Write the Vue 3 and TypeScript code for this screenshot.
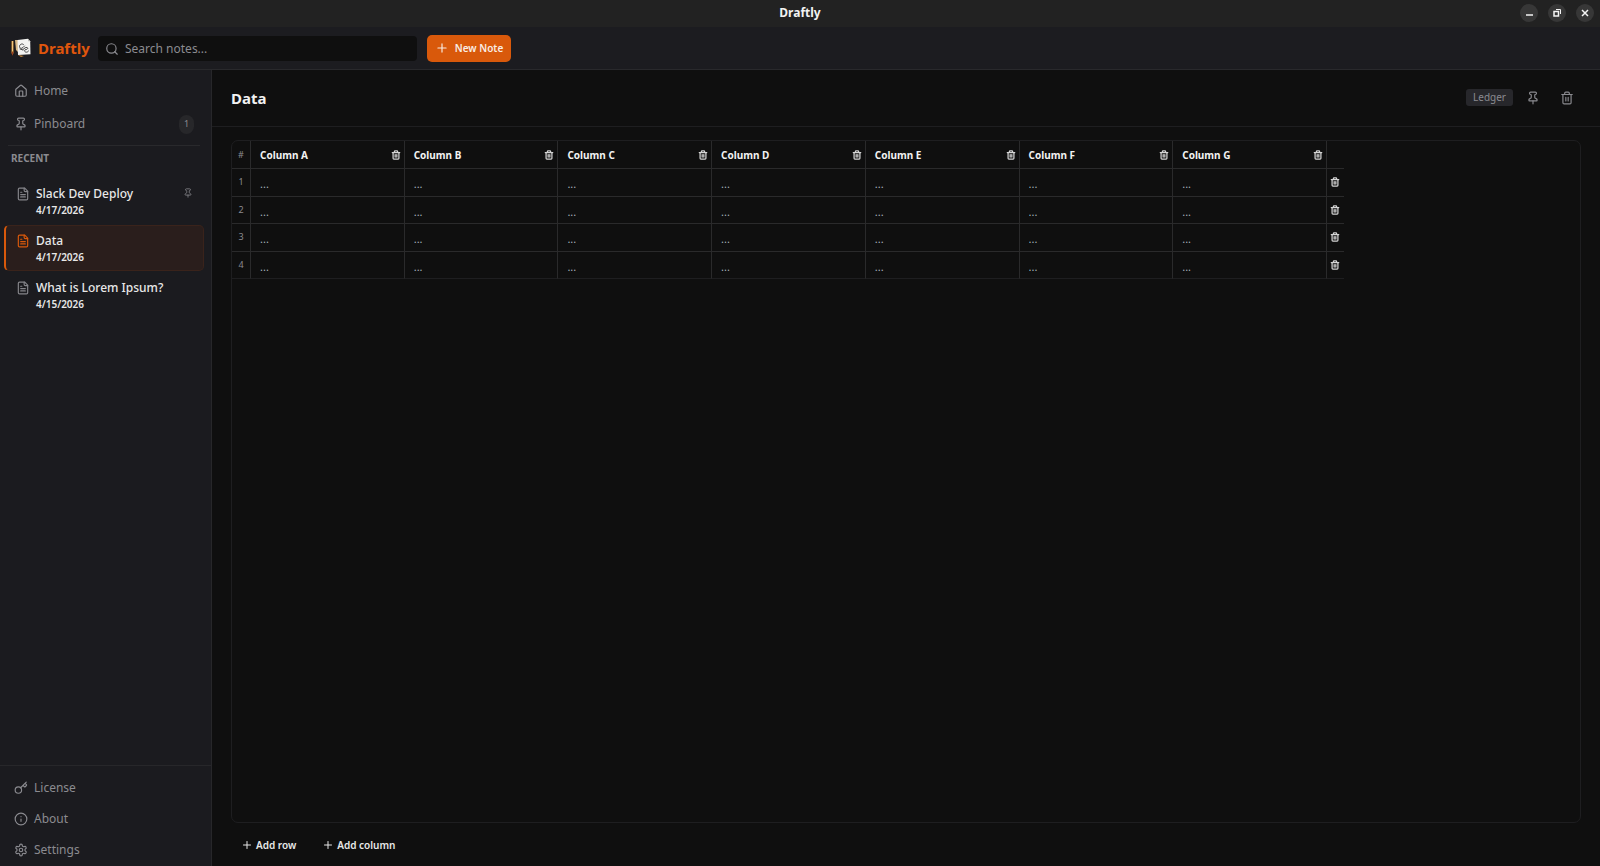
<script setup lang="ts">
import { ref } from 'vue'

interface Note {
  title: string
  date: string
  pinned: boolean
  active: boolean
}

const query = ref('')
const notes: Note[] = [
  { title: 'Slack Dev Deploy', date: '4/17/2026', pinned: true, active: false },
  { title: 'Data', date: '4/17/2026', pinned: false, active: true },
  { title: 'What is Lorem Ipsum?', date: '4/15/2026', pinned: false, active: false },
]
const columns = ['A', 'B', 'C', 'D', 'E', 'F', 'G'].map((c) => `Column ${c}`)
const rows = [1, 2, 3, 4]
</script>

<template>
  <svg class="defs" aria-hidden="true">
    <symbol id="i-home" viewBox="0 0 24 24"><path d="M15 21v-8a1 1 0 0 0-1-1h-4a1 1 0 0 0-1 1v8" /><path d="M3 10a2 2 0 0 1 .7-1.5l7-6a2 2 0 0 1 2.6 0l7 6A2 2 0 0 1 21 10v9a2 2 0 0 1-2 2H5a2 2 0 0 1-2-2z" /></symbol>
    <symbol id="i-pin" viewBox="0 0 24 24"><path d="M12 17v5" /><path d="M9 10.8a2 2 0 0 1-1.1 1.8l-1.8.9A2 2 0 0 0 5 15.2V16a1 1 0 0 0 1 1h12a1 1 0 0 0 1-1v-.8a2 2 0 0 0-1.1-1.7l-1.8-.9A2 2 0 0 1 15 10.800V7a1 1 0 0 1 1-1 2 2 0 0 0 0-4H8a2 2 0 0 0 0 4 1 1 0 0 1 1 1z" /></symbol>
    <symbol id="i-file" viewBox="0 0 24 24"><path d="M15 2H6a2 2 0 0 0-2 2v16a2 2 0 0 0 2 2h12a2 2 0 0 0 2-2V7z" /><path d="M14 2v4a2 2 0 0 0 2 2h4M10 9H8M16 13H8M16 17H8" /></symbol>
    <symbol id="i-trash" viewBox="0 0 24 24"><path d="M3 6h18M19 6v14a2 2 0 0 1-2 2H7a2 2 0 0 1-2-2V6M8 6V4a2 2 0 0 1 2-2h4a2 2 0 0 1 2 2v2M10 11v6M14 11v6" /></symbol>
    <symbol id="i-plus" viewBox="0 0 24 24"><path d="M5 12h14M12 5v14" /></symbol>
    <symbol id="i-search" viewBox="0 0 24 24"><circle cx="11" cy="11" r="8" /><path d="m21 21-4.300-4.300" /></symbol>
    <symbol id="i-key" viewBox="0 0 24 24"><circle cx="7.500" cy="15.500" r="5.500" /><path d="m21 2-9.600 9.600M15.500 7.500l2.300 2.300a1 1 0 0 0 1.400 0l2.100-2.100a1 1 0 0 0 0-1.400L19 4" /></symbol>
    <symbol id="i-info" viewBox="0 0 24 24"><circle cx="12" cy="12" r="10" /><path d="M12 16v-4M12 8h.01" /></symbol>
    <symbol id="i-gear" viewBox="0 0 24 24"><path d="M12.200 2h-.4a2 2 0 0 0-2 2v.2a2 2 0 0 1-1 1.700l-.4.3a2 2 0 0 1-2 0l-.2-.1a2 2 0 0 0-2.700.7l-.2.4a2 2 0 0 0 .7 2.700l.2.1a2 2 0 0 1 1 1.700v.5a2 2 0 0 1-1 1.800l-.2.1a2 2 0 0 0-.7 2.700l.2.4a2 2 0 0 0 2.700.7l.2-.1a2 2 0 0 1 2 0l.4.3a2 2 0 0 1 1 1.700v.2a2 2 0 0 0 2 2h.4a2 2 0 0 0 2-2v-.2a2 2 0 0 1 1-1.700l.4-.3a2 2 0 0 1 2 0l.2.1a2 2 0 0 0 2.700-.7l.2-.4a2 2 0 0 0-.7-2.700l-.2-.1a2 2 0 0 1-1-1.700v-.5a2 2 0 0 1 1-1.800l.2-.1a2 2 0 0 0 .7-2.700l-.2-.4a2 2 0 0 0-2.700-.7l-.2.1a2 2 0 0 1-2 0l-.4-.3a2 2 0 0 1-1-1.700V4a2 2 0 0 0-2-2z" /><circle cx="12" cy="12" r="3" /></symbol>
  </svg>

  <div class="window">
    <div class="titlebar">
      <span class="caption">Draftly</span>
      <div class="controls">
        <button type="button" aria-label="Minimize"><svg viewBox="0 0 18 18"><path d="M6 11h7" /></svg></button>
        <button type="button" aria-label="Restore"><svg viewBox="0 0 18 18"><path d="M6 7.500h4.500V12H6z" /><path class="thin" d="M8 5.500h4.500V10" /></svg></button>
        <button type="button" aria-label="Close"><svg viewBox="0 0 18 18"><path d="M6 6l6 6M12 6l-6 6" /></svg></button>
      </div>
    </div>

    <header class="topbar">
      <div class="brand">
        <svg class="logo" viewBox="0 0 20 20" aria-hidden="true">
          <path d="M.5 3h2v12l-1 2-1-2z" fill="#c98a3a" />
          <path d="M1 3h1v10H1z" fill="#f0c67c" />
          <path d="M.5 14h2l-1 4z" fill="#9b3e1d" />
          <path d="M4 2l5 0-1 13-3-3z" fill="#d6b98b" />
          <path d="M7 17l6 1-3 1z" fill="#c88a3d" />
          <path d="M6.500 2L17 .8l2.200 2.400.3 13L7 17z" fill="#f3f3f1" />
          <path d="M17 .8l.2 2.500 2 0z" fill="#b9b9b5" />
          <path d="M12.500 6.500c-1.500-1.500-4 0-4 2s2 2.500 3.500 1l1.500-1.500M12 11.500c1.500-1 2.500-2.500 4-2s.5 2-1 2-2 2-.5 2.500 2 0 3-1M9 11l3 1" fill="none" stroke="#333" stroke-width=".9" stroke-linecap="round" />
        </svg>
        <span>Draftly</span>
      </div>
      <label class="search">
        <svg class="icon s14"><use href="#i-search" /></svg>
        <input v-model="query" type="text" aria-label="Search notes" placeholder="Search notes..." />
      </label>
      <button type="button" class="new-note"><svg class="icon s14"><use href="#i-plus" /></svg>New Note</button>
    </header>

    <div class="body">
      <aside class="sidebar">
        <nav class="nav" aria-label="Main">
          <a href="#home"><svg class="icon s14"><use href="#i-home" /></svg>Home</a>
          <a href="#pinboard"><svg class="icon s14"><use href="#i-pin" /></svg>Pinboard<span class="count">1</span></a>
        </nav>
        <h2 class="section">RECENT</h2>
        <ul class="notes">
          <li v-for="note in notes" :key="note.title">
            <a href="#note" class="note" :class="{ active: note.active }">
              <svg class="icon s14"><use href="#i-file" /></svg>
              <span class="meta"><span class="name">{{ note.title }}</span><span class="date">{{ note.date }}</span></span>
              <svg v-if="note.pinned" class="icon s10"><use href="#i-pin" /></svg>
            </a>
          </li>
        </ul>
        <nav class="nav bottom" aria-label="Application">
          <a href="#license"><svg class="icon s14"><use href="#i-key" /></svg>License</a>
          <a href="#about"><svg class="icon s14"><use href="#i-info" /></svg>About</a>
          <a href="#settings"><svg class="icon s14"><use href="#i-gear" /></svg>Settings</a>
        </nav>
      </aside>

      <main class="main">
        <div class="heading">
          <h1>Data</h1>
          <span class="tag">Ledger</span>
          <button type="button" class="tool" aria-label="Pin note"><svg class="icon s14"><use href="#i-pin" /></svg></button>
          <button type="button" class="tool" aria-label="Delete note"><svg class="icon s14"><use href="#i-trash" /></svg></button>
        </div>

        <div class="sheet">
          <table>
            <colgroup>
              <col class="c-num" />
              <col v-for="c in columns" :key="c" />
              <col class="c-del" />
            </colgroup>
            <thead>
              <tr>
                <th class="num" scope="col">#</th>
                <th v-for="c in columns" :key="c" scope="col">
                  <div class="col-head">{{ c }}<button type="button" :aria-label="`Delete ${c}`"><svg class="icon s10"><use href="#i-trash" /></svg></button></div>
                </th>
                <td class="del"></td>
              </tr>
            </thead>
            <tbody>
              <tr v-for="r in rows" :key="r">
                <th class="num" scope="row">{{ r }}</th>
                <td v-for="c in columns" :key="c"><input type="text" placeholder="..." :aria-label="`${c}, row ${r}`" /></td>
                <td class="del"><button type="button" :aria-label="`Delete row ${r}`"><svg class="icon s10"><use href="#i-trash" /></svg></button></td>
              </tr>
            </tbody>
          </table>
        </div>

        <div class="actions">
          <button type="button"><svg class="icon s12"><use href="#i-plus" /></svg>Add row</button>
          <button type="button"><svg class="icon s12"><use href="#i-plus" /></svg>Add column</button>
        </div>
      </main>
    </div>
  </div>
</template>

<style>
html, body { margin: 0; height: 100%; background: #0f0f10; }
#app { height: 100%; }
</style>

<style scoped>
* { box-sizing: border-box; }
.defs { position: absolute; width: 0; height: 0; }
.window { display: flex; flex-direction: column; height: 100vh; overflow: hidden; background: #0f0f0f; color: #e8e8e8; font: 12px/18px "Noto Sans", "Open Sans", sans-serif; }
button { display: flex; align-items: center; justify-content: center; border: 0; padding: 0; background: none; color: inherit; font: inherit; cursor: pointer; }
input { border: 0; outline: 0; padding: 0; background: none; color: inherit; font: inherit; min-width: 0; }
a { color: inherit; text-decoration: none; }
h1, h2, ul { margin: 0; padding: 0; list-style: none; }
.icon { flex: none; fill: none; stroke: currentColor; stroke-width: 2; stroke-linecap: round; stroke-linejoin: round; }
.s14 { width: 14px; height: 14px; }
.s12 { width: 12px; height: 12px; }
.s10 { width: 10px; height: 10px; }

.titlebar { flex: none; display: grid; grid-template-columns: 1fr auto 1fr; align-items: center; height: 27px; padding-bottom: 2px; background: #222; }
.caption { grid-column: 2; font-weight: 700; color: #f2f2f2; }
.controls { display: flex; justify-content: flex-end; gap: 10px; padding-right: 6px; }
.controls button { width: 18px; height: 18px; border-radius: 50%; background: #373737; }
.controls svg { width: 18px; height: 18px; fill: none; stroke: #f5f5f5; stroke-width: 1.500; }
.controls .thin { stroke-width: 1; }

.topbar { flex: none; display: flex; align-items: center; height: 43px; padding: 0 11px; border-bottom: 1px solid #29292c; background: #1c1c20; }
.brand { display: flex; align-items: center; gap: 7px; width: 87px; color: #e0560d; font-size: 15px; font-weight: 700; }
.logo { flex: none; width: 20px; height: 20px; }
.search { display: flex; align-items: center; gap: 6px; flex: 0 1 319px; height: 25px; padding: 2px 7px 0; border-radius: 4px; background: #0f0f0f; color: #8b8b90; }
.search input { flex: 1; }
.search input::placeholder { color: #8b8b90; opacity: 1; }
.new-note { gap: 6px; width: 84px; height: 27px; margin-left: 10px; border-radius: 5px; background: #d9590b; color: #f8ece4; font-size: 10px; font-weight: 600; white-space: nowrap; }

.body { flex: 1; display: flex; min-height: 0; }
.sidebar { flex: none; display: flex; flex-direction: column; width: 212px; border-right: 1px solid #27272a; background: #1b1b1f; }
.nav { display: flex; flex-direction: column; margin: 5px 11px 0 8px; padding-bottom: 4px; border-bottom: 1px solid #29292c; color: #8b8b90; }
.nav a { display: flex; align-items: center; gap: 6px; height: 32px; padding: 0 6px; }
.nav a + a { height: 34px; }
.nav.bottom { margin: 0; padding: 6px 8px 1px; border-top: 1px solid #27272a; border-bottom: 0; }
.nav.bottom a { height: 31px; }
.count { display: grid; place-items: center; width: 15px; height: 19px; margin-left: auto; border-radius: 8px; background: #27272a; font-size: 9px; }
.section { padding: 4px 11px; font-size: 10px; line-height: 16px; font-weight: 700; color: #8b8b90; }
.notes { flex: 1; padding: 8px 7px 0 4px; min-height: 0; overflow: hidden; }
.notes li { margin-bottom: 1px; }
.note { display: flex; align-items: flex-start; gap: 6px; height: 46px; padding: 7px 10px 0; border: 1px solid transparent; border-left-width: 2px; border-radius: 5px; }
.note .icon { margin-top: 1px; color: #85858a; }
.note .s10 { margin-top: 2px; }
.note.active { background: #2a1e1c; border-color: #3a231b; border-left-color: #d9590b; }
.note.active .icon { color: #d9590b; }
.meta { flex: 1; display: flex; flex-direction: column; line-height: 16px; }
.name { font-size: 12px; font-weight: 500; }
.date { font-size: 10px; font-weight: 600; }

.main { flex: 1; display: flex; flex-direction: column; min-width: 0; }
.heading { flex: none; display: flex; align-items: center; height: 57px; padding: 0 19px 1px; border-bottom: 1px solid #1e1e20; color: #8b8b90; }
h1 { flex: 1; font-size: 15px; line-height: 22px; font-weight: 700; color: #f2f2f2; }
.tag { padding: 0 7px; height: 17px; border-radius: 3px; background: #27272b; font-size: 10px; line-height: 16px; }
.tool { width: 28px; height: 28px; margin-left: 6px; }

.sheet { flex: 1; margin: 13px 19px 0; min-height: 0; overflow: auto; border: 1px solid #1e1e20; border-radius: 7px; }
table { table-layout: fixed; width: 1112px; height: 138px; border-collapse: separate; border-spacing: 0; }
.c-num { width: 19px; }
.c-del { width: 17px; }
thead tr { height: 28px; }
th, td { padding: 0; border-right: 1px solid #2a2a2b; border-bottom: 1px solid #2a2a2b; text-align: left; vertical-align: middle; }
td.del { border-right: 0; }
tbody tr:last-child > * { border-bottom-color: #1e1e20; }
.num { text-align: center; font-size: 9px; line-height: 12px; font-weight: 400; color: #8b8b90; }
.col-head { display: flex; align-items: center; justify-content: space-between; padding: 0 3px 0 9px; font-size: 10px; line-height: 16px; font-weight: 700; color: #f2f2f2; }
td input { display: block; width: 100%; height: 24px; padding: 3px 9px 0; font-size: 11px; line-height: 16px; }
td input::placeholder { color: #a5b0bb; opacity: 1; }
td.del button { width: 16px; height: 20px; }
table .icon { color: #d4d4d4; stroke-width: 3; }

.actions { flex: none; display: flex; align-items: center; gap: 16px; height: 43px; padding: 0 19px 0 24px; font-size: 10px; font-weight: 600; }
.actions button { gap: 3px; padding: 4px 5px; white-space: nowrap; }
</style>
